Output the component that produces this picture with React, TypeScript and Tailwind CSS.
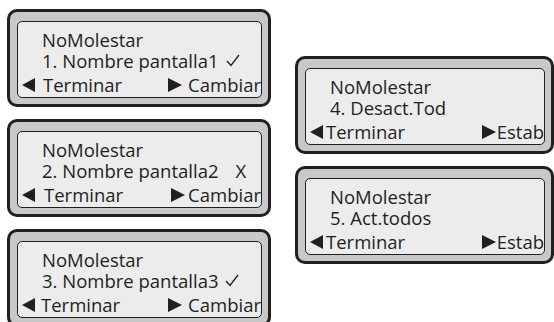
import type { ReactNode } from "react";

type Screen = {
  line2: string;
  mark?: "check" | "x";
  markGap: string;
  left: string;
  leftGap: string;
  right: string;
  rightGap: string;
};

const leftScreens: Screen[] = [
  { line2: "1. Nombre pantalla1", mark: "check", markGap: "ml-[7px]", left: "Terminar", leftGap: "ml-[8px]", right: "Cambiar", rightGap: "ml-[6px]" },
  { line2: "2. Nombre pantalla2", mark: "x", markGap: "ml-[17px]", left: "Terminar", leftGap: "ml-[9px]", right: "Cambiar", rightGap: "ml-[3px]" },
  { line2: "3. Nombre pantalla3", mark: "check", markGap: "ml-[6px]", left: "Terminar", leftGap: "ml-[6px]", right: "Cambiar", rightGap: "ml-[6px]" },
];

const rightScreens: Screen[] = [
  { line2: "4. Desact.Tod", markGap: "", left: "Terminar", leftGap: "ml-[3px]", right: "Estab", rightGap: "ml-[1px]" },
  { line2: "5. Act.todos", markGap: "", left: "Terminar", leftGap: "ml-[3px]", right: "Estab", rightGap: "ml-[1px]" },
];

function ArrowLeft() {
  return (
    <svg width="13" height="14" viewBox="0 0 13 14" className="shrink-0">
      <polygon points="13,0 13,14 0,7" fill="#231f20" />
    </svg>
  );
}

function ArrowRight() {
  return (
    <svg width="14" height="14" viewBox="0 0 14 14" className="shrink-0">
      <polygon points="0,0 0,14 14,7" fill="#231f20" />
    </svg>
  );
}

function Check() {
  return (
    <svg width="14" height="13" viewBox="0 0 14 13" className="shrink-0">
      <path d="M1 7 L5 11.5 L13 1" fill="none" stroke="#231f20" strokeWidth="1.3" />
    </svg>
  );
}

function Panel({ s, width }: { s: Screen; width: string }): ReactNode {
  return (
    <div className={`${width} shrink-0 rounded-[10px] border-[3px] border-[#231f20] bg-[#c8c8c8] pb-[6px] pl-[7px] pr-[6px] pt-[9px]`}>
      <div className="h-[77px] rounded-[5px] border-[1.5px] border-[#231f20] bg-[#ececec] pt-[7px]">
        <div className="pl-[24px]">NoMolestar</div>
        <div className="flex items-center pl-[24px]">
          <span>{s.line2}</span>
          {s.mark === "check" && (
            <span className={s.markGap}>
              <Check />
            </span>
          )}
          {s.mark === "x" && <span className={s.markGap}>X</span>}
        </div>
        <div className="mt-[3px] flex items-center pl-[4px]">
          <ArrowLeft />
          <span className={s.leftGap}>{s.left}</span>
          <div className="flex-1" />
          <ArrowRight />
          <span className={s.rightGap}>{s.right}</span>
        </div>
      </div>
    </div>
  );
}

export default function App() {
  return (
    <div className="relative flex h-[322px] w-[554px] overflow-hidden bg-white font-['Open_Sans',sans-serif] text-[18.5px] leading-[21px] text-[#231f20]">
      <div className="ml-[7px] mt-[9px] flex flex-col gap-[12px]">
        {leftScreens.map((s) => (
          <Panel key={s.line2} s={s} width="w-[264px]" />
        ))}
      </div>
      <div className="ml-[24px] mt-[56px] flex flex-col gap-[12px]">
        {rightScreens.map((s) => (
          <Panel key={s.line2} s={s} width="w-[259px]" />
        ))}
      </div>
    </div>
  );
}
